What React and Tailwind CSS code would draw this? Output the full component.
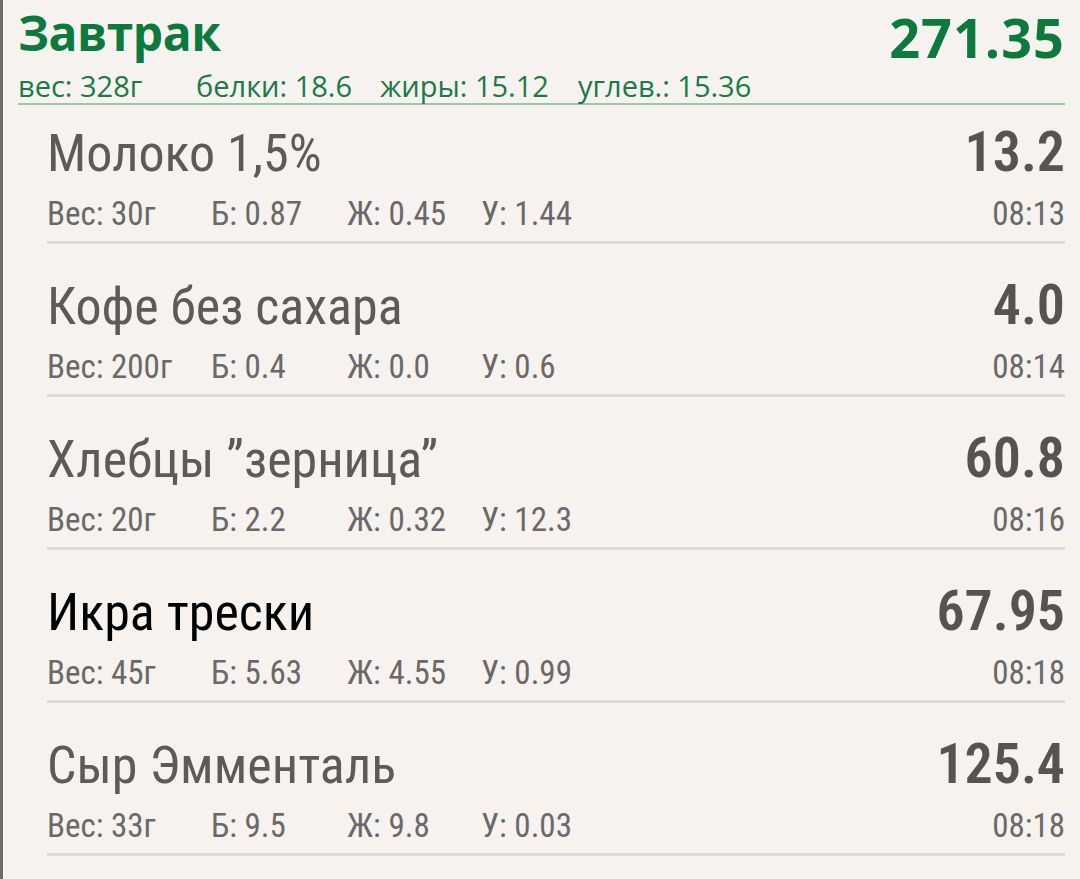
import React from "react";

const items = [
  { name: "Молоко 1,5%", kcal: "13.2", w: "30г", b: "0.87", f: "0.45", c: "1.44", time: "08:13" },
  { name: "Кофе без сахара", kcal: "4.0", w: "200г", b: "0.4", f: "0.0", c: "0.6", time: "08:14" },
  { name: "Хлебцы \u201dзерница\u201d", kcal: "60.8", w: "20г", b: "2.2", f: "0.32", c: "12.3", time: "08:16" },
  { name: "Икра трески", kcal: "67.95", w: "45г", b: "5.63", f: "4.55", c: "0.99", time: "08:18", active: true },
  { name: "Сыр Эмменталь", kcal: "125.4", w: "33г", b: "9.5", f: "9.8", c: "0.03", time: "08:18" },
];

export default function App() {
  return (
    <div
      className="w-[1080px] h-[879px] bg-[#f6f2ef] border-l-[3px] border-[#6e6b69] overflow-hidden"
      style={{ fontFamily: '"Roboto Condensed", "Open Sans", sans-serif' }}
    >
      <div className="pl-[15px] pr-[15px]" style={{ fontFamily: '"Open Sans", "Noto Sans", sans-serif' }}>
        <div className="flex justify-between items-start h-[69px]">
          <h1 className="pt-[5px] text-[48px] leading-[56px] font-bold text-[#0c7a3c] tracking-[-0.5px]">Завтрак</h1>
          <span className="pt-[5px] text-[54px] leading-[64px] font-bold text-[#0c7a3c] tracking-[1px]">271.35</span>
        </div>
        <div className="flex text-[29px] leading-[34px] text-[#1b7a46] border-b-2 border-[#9cc6aa]">
          <span className="w-[178px]">вес: 328г</span>
          <span className="w-[184px]">белки: 18.6</span>
          <span className="w-[198px]">жиры: 15.12</span>
          <span>углев.: 15.36</span>
        </div>
      </div>
      <div className="pl-[44px] pr-[15px]">
        {items.map((it, i) => (
          <div key={i} className={`${i === 0 ? "pt-[17px]" : "pt-[31px]"} pb-[7px] border-b-[3px] border-[#dcdad7]`}>
            <div className="flex justify-between items-baseline">
              <span className={`text-[52px] leading-[60px] ${it.active ? "text-black" : "text-[#5c5b5a]"}`}>{it.name}</span>
              <span className="text-[56px] leading-[60px] font-semibold text-[#555452]">{it.kcal}</span>
            </div>
            <div className="mt-[10px] flex text-[33px] leading-[40px] text-[#6a6968]">
              <span className="w-[164px]">Вес: {it.w}</span>
              <span className="w-[136px]">Б: {it.b}</span>
              <span className="w-[134px]">Ж: {it.f}</span>
              <span>У: {it.c}</span>
              <span className="ml-auto">{it.time}</span>
            </div>
          </div>
        ))}
      </div>
    </div>
  );
}
